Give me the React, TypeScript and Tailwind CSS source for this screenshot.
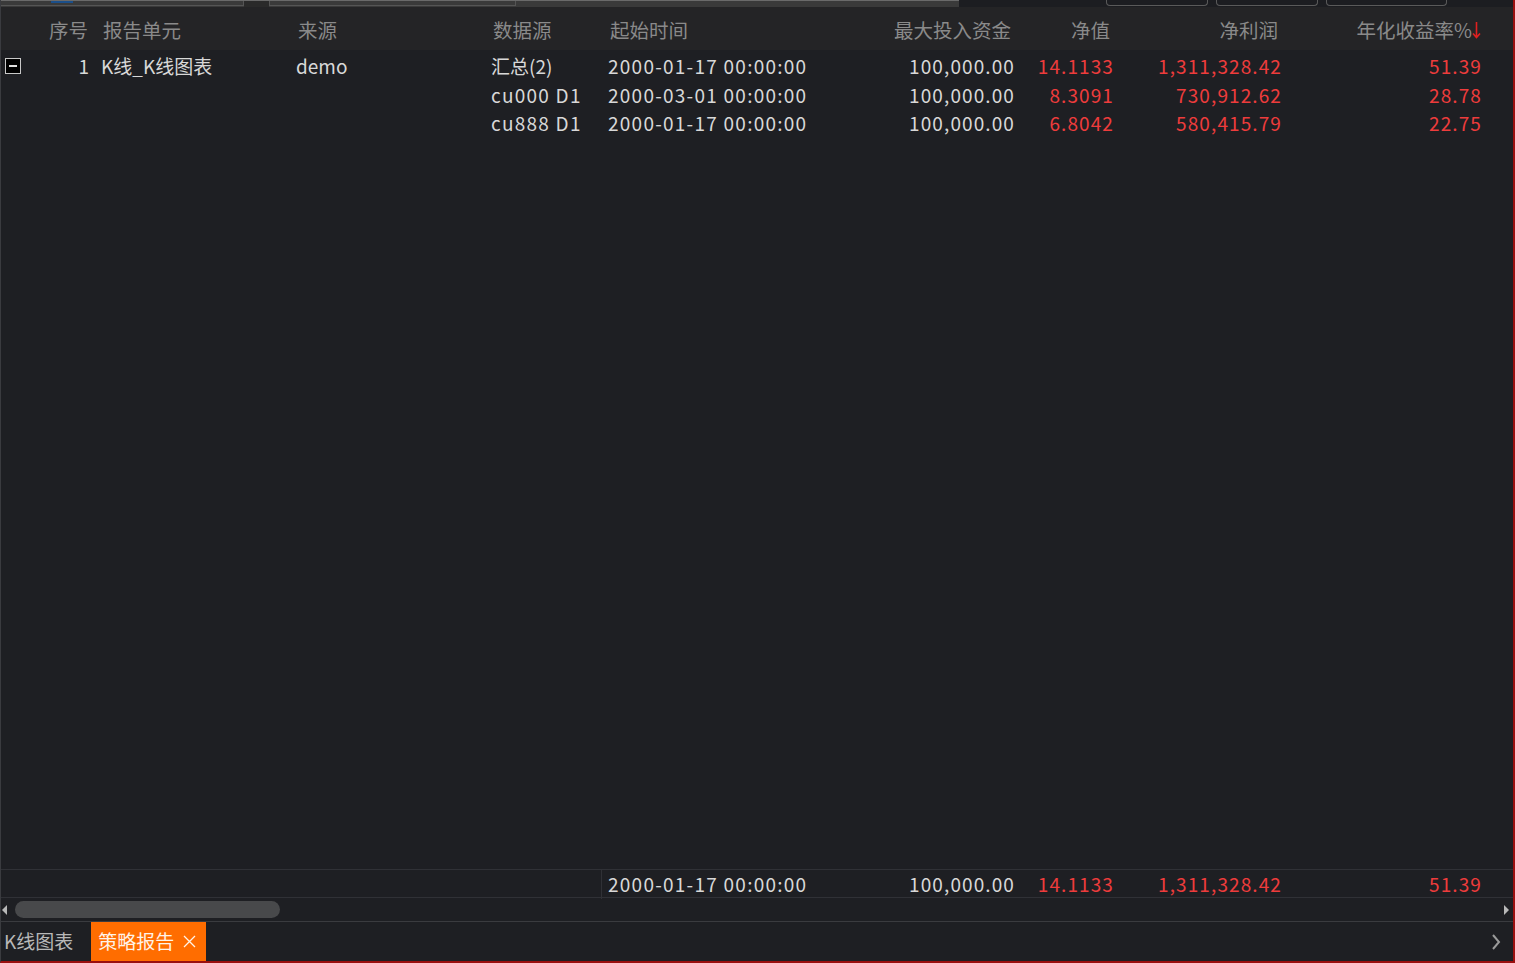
import React from "react";

type Row = {
  tree?: boolean;
  idx?: string;
  unit?: string;
  source?: string;
  ds: string;
  start: string;
  cap: string;
  nav: string;
  profit: string;
  annual: string;
};

const rows: Row[] = [
  { tree: true, idx: "1", unit: "K线_K线图表", source: "demo", ds: "汇总(2)", start: "2000-01-17 00:00:00", cap: "100,000.00", nav: "14.1133", profit: "1,311,328.42", annual: "51.39" },
  { ds: "cu000 D1", start: "2000-03-01 00:00:00", cap: "100,000.00", nav: "8.3091", profit: "730,912.62", annual: "28.78" },
  { ds: "cu888 D1", start: "2000-01-17 00:00:00", cap: "100,000.00", nav: "6.8042", profit: "580,415.79", annual: "22.75" },
];

// 列宽按截图里的像素位置量出来的
const cols = "grid grid-cols-[90px_205px_195px_117px_213px_193px_99px_168px_200px_1fr]";
const font = { fontFamily: '"Noto Sans CJK SC", "Microsoft YaHei", sans-serif' };
// 数字字形比原图窄一点，拉开一点字距
const num = "tracking-[1.25px]";
const numR = "tracking-[1.1px] -mr-[1px] text-right";
const red = "text-[#ee3c3c]";

function TreeBox() {
  return (
    <span className="flex h-[16px] w-[16px] items-center justify-center border border-[#c8c8c8] bg-black">
      <span className="h-[2px] w-[8px] bg-[#e0e0e0]" />
    </span>
  );
}

function SortArrow() {
  return (
    <svg width="9" height="18" viewBox="0 0 9 18" fill="none" stroke="#e02020" strokeWidth="1.6">
      <path d="M4.5 1 L4.5 16.5 M1 12.5 L4.5 16.5 L8 12.5" />
    </svg>
  );
}

export default function App() {
  return (
    <div className="flex h-[963px] w-[1515px] flex-col overflow-hidden border-b-2 border-l border-r-2 border-b-[#9a0f0f] border-l-[#3a3b3f] border-r-[#9a0f0f] bg-[#1e1f23] text-[19px]" style={font}>
      {/* 上面工具栏剩下的一条 */}
      <div className="flex h-[7px] shrink-0">
        <div className="flex w-[958px] items-start border-t border-[#6a6a6a] bg-[#3a3a3a]">
          <div className="h-[5px] w-[243px] border-b border-r border-[#555]">
            <div className="ml-[50px] h-[2px] w-[22px] bg-[#1b4f8a]" />
          </div>
          <div className="h-[6px] w-[25px] bg-[#2a2a2a]" />
          <div className="h-[5px] w-[247px] border-b border-l border-r border-[#555]" />
          <div className="flex-1" />
        </div>
        <div className="flex flex-1 items-start gap-[8px] bg-[#1c1d21] pl-[147px]">
          <div className="h-[6px] w-[102px] rounded-b-[4px] border border-t-0 border-[#5a5a5a]" />
          <div className="h-[6px] w-[102px] rounded-b-[4px] border border-t-0 border-[#5a5a5a]" />
          <div className="h-[6px] w-[121px] rounded-b-[4px] border border-t-0 border-[#5a5a5a]" />
        </div>
      </div>

      {/* 表头 */}
      <div className={cols + " h-[43px] shrink-0 items-center bg-[#242426] pt-[3px] text-[19.5px] text-[#8a8a8a]"}>
        <div className="pr-[3px] text-right">序号</div>
        <div className="pl-[12px]">报告单元</div>
        <div className="pl-[2px]">来源</div>
        <div className="pl-[2px]">数据源</div>
        <div className="pl-[2px]">起始时间</div>
        <div className="pr-[3px] text-right">最大投入资金</div>
        <div className="pr-[3px] text-right">净值</div>
        <div className="pr-[3px] text-right">净利润</div>
        <div className="flex items-center justify-end">
          年化收益率%
          <SortArrow />
        </div>
        <div />
      </div>

      {/* 数据 */}
      <div className="flex-1 pt-[2px] text-[#d8d8d8]">
        {rows.map((r, i) => (
          <div key={i} className={cols + " h-[28.5px] items-center"}>
            <div className="flex items-center justify-between pl-[4px] pr-[2px]">
              {r.tree ? <TreeBox /> : <span />}
              <span>{r.idx ?? ""}</span>
            </div>
            <div className="pl-[10px]">{r.unit ?? ""}</div>
            <div>{r.source ?? ""}</div>
            <div className={r.tree ? "" : num}>{r.ds}</div>
            <div className={num}>{r.start}</div>
            <div className={numR}>{r.cap}</div>
            <div className={numR + " " + red}>{r.nav}</div>
            <div className={numR + " " + red}>{r.profit}</div>
            <div className={numR + " " + red}>{r.annual}</div>
            <div />
          </div>
        ))}
      </div>

      {/* 合计 */}
      <div className={cols + " h-[29px] shrink-0 items-center border-y border-[#303136] text-[#d8d8d8]"}>
        <div className="col-span-4 mr-[6px] h-full border-r border-[#303136]" />
        <div className={num}>2000-01-17 00:00:00</div>
        <div className={numR}>100,000.00</div>
        <div className={numR + " " + red}>14.1133</div>
        <div className={numR + " " + red}>1,311,328.42</div>
        <div className={numR + " " + red}>51.39</div>
        <div />
      </div>

      {/* 横向滚动条 */}
      <div className="flex h-[24px] shrink-0 items-center border-b border-[#3a3b3f]">
        <span className="ml-[1px] h-0 w-0 border-y-[5px] border-r-[5px] border-y-transparent border-r-[#b8b8b8]" />
        <div className="ml-[8px] h-[17px] w-[265px] rounded-full bg-[#48494b]" />
        <div className="flex-1" />
        <span className="mr-[4px] h-0 w-0 border-y-[5px] border-l-[5px] border-y-transparent border-l-[#b8b8b8]" />
      </div>

      {/* 底部标签 */}
      <div className="flex h-[39px] shrink-0 items-stretch">
        <div className="flex items-center pl-[3px] pr-[18px] text-[#b8b8b8]">K线图表</div>
        <div className="flex items-center gap-[9px] bg-[#ff6d00] pl-[7px] pr-[10px] text-[#fff3e8]">
          策略报告
          <svg width="13" height="13" viewBox="0 0 13 13" stroke="#fff3e8" strokeWidth="1.3">
            <path d="M1 1 L12 12 M12 1 L1 12" />
          </svg>
        </div>
        <div className="flex-1" />
        <div className="flex items-center pr-[12px]">
          <svg width="10" height="18" viewBox="0 0 10 18" fill="none" stroke="#9a9a9a" strokeWidth="2">
            <path d="M2 2 L8 9 L2 16" />
          </svg>
        </div>
      </div>
    </div>
  );
}
